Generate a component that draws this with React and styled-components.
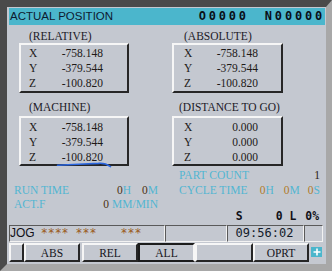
import React from 'react';
import styled, { createGlobalStyle } from 'styled-components';

const SERIF = '"Liberation Serif", "Times New Roman", serif';
const SANS = '"Liberation Sans", Arial, sans-serif';
const MONO = '"DejaVu Sans Mono", "Liberation Mono", monospace';

const BG = '#c4c8d0';
const CYAN = '#4bb6cc';
const LABEL_CYAN = '#52b6d2';
const LIGHT = '#f6f6f6';
const DARK = '#262626';

const Global = createGlobalStyle`
  html, body { margin: 0; padding: 0; background: ${BG}; }
  #root { width: 332px; height: 271px; }
`;

const Frame = styled.div`
  box-sizing: border-box;
  width: 332px;
  height: 271px;
  border-style: solid;
  border-width: 7px 6px 7px 7px;
  border-color: #4a4a4a #a8a8a8 #a8a8a8 #4a4a4a;
  background: ${BG};
  display: flex;
  flex-direction: column;
  padding-top: 1px;
  overflow: hidden;
`;

const Header = styled.div`
  height: 17px;
  margin: 0 1px 0 2px;
  background: ${CYAN};
  display: flex;
  align-items: center;
  justify-content: space-between;
`;

const Title = styled.span`
  font-family: ${SANS};
  font-size: 11.5px;
  line-height: 17px;
  color: #0e1a30;
  padding-left: 1px;
`;

const ProgNo = styled.div`
  display: flex;
  font-family: ${MONO};
  font-weight: bold;
  font-size: 12px;
  letter-spacing: 2.8px;
  line-height: 17px;
  color: #0a0f18;
`;

const ProgPart = styled.span`
  margin-left: ${(p) => p.$ml || 0}px;
`;

const Positions = styled.div`
  display: grid;
  grid-template-columns: 110px 111px;
  column-gap: 43px;
  row-gap: 7px;
  padding-left: 12px;
  margin-top: 4px;
`;

const Section = styled.div`
  display: flex;
  flex-direction: column;
`;

const SectionLabel = styled.div`
  font-family: ${SERIF};
  font-size: 11.5px;
  line-height: 14px;
  color: #1c1a28;
  padding-left: ${(p) => p.$indent}px;
  margin-bottom: ${(p) => p.$gap}px;
`;

const Box = styled.div`
  position: relative;
  box-sizing: border-box;
  height: 50px;
  border: 2px solid;
  border-color: ${LIGHT} ${DARK} ${DARK} ${LIGHT};
  padding: ${(p) => p.$pad}px 0 0 ${(p) => p.$left}px;
`;

const AxisRow = styled.div`
  display: flex;
  font-family: ${SERIF};
  font-size: 11.5px;
  line-height: 15px;
  color: #1e1a18;
`;

const Axis = styled.span`
  width: 20px;
`;

const Value = styled.span`
  width: 54px;
  text-align: right;
`;

const PenMark = styled.svg`
  position: absolute;
  left: 0;
  top: 0;
  overflow: visible;
  pointer-events: none;
`;

const Info = styled.div`
  display: grid;
  grid-template-columns: 144px 141px;
  column-gap: 21px;
  padding-left: 7px;
  margin-top: 2px;
  font-family: ${SERIF};
  font-size: 11.5px;
  line-height: 14.5px;
  height: 43.5px;
`;

const InfoLine = styled.div`
  display: flex;
  justify-content: space-between;
  grid-column: ${(p) => p.$col};
  grid-row: ${(p) => p.$row};
`;

const InfoLabel = styled.span`
  color: ${LABEL_CYAN};
`;

const InfoValue = styled.span`
  display: flex;
  white-space: pre;
`;

const Num = styled.span`
  color: ${(p) => p.$tone};
  margin-left: ${(p) => p.$ml || 0}px;
`;

const Unit = styled.span`
  color: ${LABEL_CYAN};
`;

const SpindleLine = styled.div`
  display: flex;
  justify-content: flex-end;
  padding-right: 7px;
  font-family: ${MONO};
  font-weight: bold;
  font-size: 11.4px;
  line-height: 9px;
  height: 9px;
  color: #101018;
  white-space: pre;
`;

const SpindleItem = styled.span`
  margin-left: ${(p) => p.$ml || 0}px;
`;

const StatusBar = styled.div`
  display: flex;
  height: 17px;
  margin: 4px 0 0 2px;
`;

const Cell = styled.div`
  box-sizing: border-box;
  width: ${(p) => p.$w}px;
  height: 17px;
  border: 1px solid;
  border-color: #5a5a5a #f2f2f2 #f2f2f2 #5a5a5a;
  display: flex;
  align-items: center;
  justify-content: ${(p) => (p.$center ? 'center' : 'flex-start')};
  overflow: hidden;
`;

const Mode = styled.span`
  font-family: ${SANS};
  font-size: 12px;
  line-height: 15px;
  color: #101018;
`;

const Stars = styled.span`
  font-family: ${MONO};
  font-size: 11.6px;
  line-height: 15px;
  color: #9a5a18;
  white-space: pre;
  margin-left: ${(p) => p.$ml}px;
  align-self: flex-start;
`;

const Clock = styled.span`
  font-family: ${MONO};
  font-size: 12px;
  line-height: 15px;
  color: #121a2a;
  margin-left: -2px;
`;

const Keys = styled.div`
  display: flex;
  align-items: center;
  height: 19px;
  margin: 1px 0 0 2px;
`;

const Key = styled.div`
  box-sizing: border-box;
  width: ${(p) => p.$w}px;
  height: 19px;
  margin-left: ${(p) => p.$ml || 0}px;
  border: 2px solid;
  border-color: ${(p) =>
    p.$active
      ? `#1c1c1c ${LIGHT} #1c1c1c #1c1c1c`
      : `${LIGHT} ${DARK} ${DARK} ${LIGHT}`};
  display: flex;
  align-items: center;
  justify-content: center;
  padding-top: 2px;
  font-family: ${SERIF};
  font-size: 11.5px;
  color: #141420;
`;

const PlusKey = styled.div`
  width: 11px;
  height: 10px;
  margin: 0 0 1px 2px;
  background: ${CYAN};
  display: flex;
  align-items: center;
  justify-content: center;
`;

const axes = (vals) => [
  ['X', vals[0]],
  ['Y', vals[1]],
  ['Z', vals[2]],
];

function PosBox({ label, indent, gap, pad, left, values, mark }) {
  return (
    <Section>
      <SectionLabel $indent={indent} $gap={gap}>
        {label}
      </SectionLabel>
      <Box $pad={pad} $left={left}>
        {axes(values).map(([a, v]) => (
          <AxisRow key={a}>
            <Axis>{a}</Axis>
            <Value>{v}</Value>
          </AxisRow>
        ))}
        {mark && (
          <PenMark width="110" height="50" viewBox="0 0 110 50">
            <path
              d="M36.5 47.3 Q58 46.2 77.5 45.4 Q84 44.8 89.5 48.6"
              fill="none"
              stroke="#2a66e0"
              strokeWidth="1.6"
              strokeLinecap="round"
            />
          </PenMark>
        )}
      </Box>
    </Section>
  );
}

const DARK_NUM = '#4a3012';
const ORANGE_NUM = '#b07a28';

export default function App() {
  const mach = ['-758.148', '-379.544', '-100.820'];
  return (
    <>
      <Global />
      <Frame>
        <Header>
          <Title>ACTUAL POSITION</Title>
          <ProgNo>
            <ProgPart>O0000</ProgPart>
            <ProgPart $ml={16}>N00000</ProgPart>
          </ProgNo>
        </Header>

        <Positions>
          <PosBox label="(RELATIVE)" indent={10} gap={0} pad={1} left={8} values={mach} />
          <PosBox label="(ABSOLUTE)" indent={12} gap={0} pad={1} left={10} values={mach} />
          <PosBox label="(MACHINE)" indent={10} gap={2} pad={2} left={8} values={mach} mark />
          <PosBox
            label="(DISTANCE TO GO)"
            indent={7}
            gap={2}
            pad={2}
            left={10}
            values={['0.000', '0.000', '0.000']}
          />
        </Positions>

        <Info>
          <InfoLine $col={2} $row={1}>
            <InfoLabel>PART COUNT</InfoLabel>
            <InfoValue>
              <Num $tone="#2a2010">1</Num>
            </InfoValue>
          </InfoLine>
          <InfoLine $col={1} $row={2}>
            <InfoLabel>RUN TIME</InfoLabel>
            <InfoValue>
              <Num $tone={DARK_NUM}>0</Num>
              <Unit>H</Unit>
              <Num $tone={DARK_NUM} $ml={11}>0</Num>
              <Unit>M</Unit>
            </InfoValue>
          </InfoLine>
          <InfoLine $col={2} $row={2}>
            <InfoLabel>CYCLE TIME</InfoLabel>
            <InfoValue>
              <Num $tone={ORANGE_NUM}>0</Num>
              <Unit>H</Unit>
              <Num $tone={ORANGE_NUM} $ml={10}>0</Num>
              <Unit>M</Unit>
              <Num $tone={ORANGE_NUM} $ml={8}>0</Num>
              <Unit>S</Unit>
            </InfoValue>
          </InfoLine>
          <InfoLine $col={1} $row={3}>
            <InfoLabel>ACT.F</InfoLabel>
            <InfoValue>
              <Num $tone={DARK_NUM}>0</Num>
              <Unit> MM/MIN</Unit>
            </InfoValue>
          </InfoLine>
        </Info>

        <SpindleLine>
          <SpindleItem>S</SpindleItem>
          <SpindleItem $ml={33}>0 L</SpindleItem>
          <SpindleItem $ml={9}>0%</SpindleItem>
        </SpindleLine>

        <StatusBar>
          <Cell $w={156}>
            <Mode>JOG</Mode>
            <Stars $ml={6}>**** ***</Stars>
            <Stars $ml={24}>***</Stars>
          </Cell>
          <Cell $w={62} />
          <Cell $w={77} $center>
            <Clock>09:56:02</Clock>
          </Cell>
          <Cell $w={19} />
        </StatusBar>

        <Keys>
          <Key $w={15} />
          <Key $w={56}>ABS</Key>
          <Key $w={56} $ml={2}>REL</Key>
          <Key $w={57} $active>ALL</Key>
          <Key $w={58} />
          <Key $w={56}>OPRT</Key>
          <PlusKey>
            <svg width="8" height="8" viewBox="0 0 8 8">
              <path d="M4 0.5V7.5M0.5 4H7.5" stroke="#ffffff" strokeWidth="1.6" />
            </svg>
          </PlusKey>
        </Keys>
      </Frame>
    </>
  );
}
